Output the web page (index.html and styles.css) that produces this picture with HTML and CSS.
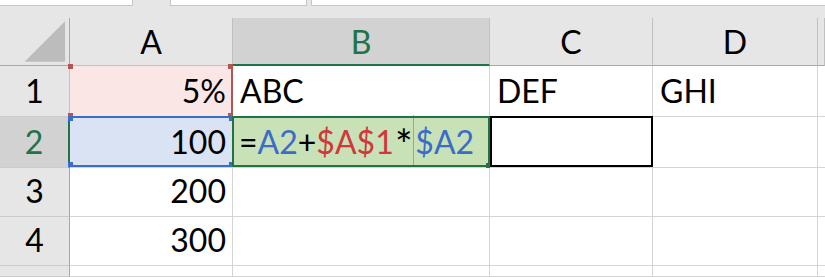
FILE: index.html
```html
<!DOCTYPE html>
<html lang="en">
<head>
  <meta charset="UTF-8" />
  <title>Sheet1</title>
  <link rel="stylesheet" href="styles.css">
</head>
<body>
  <div class="toolbar">
    <div class="box name-box"></div>
    <div class="box fx-box"></div>
    <div class="box formula-box"></div>
  </div>

  <div class="sheet">
    <!-- column headers -->
    <div class="hd corner">
      <svg width="70" height="48" viewBox="0 0 70 48"><polygon points="25,45 66,4 66,45" fill="#bcbcbc"/></svg>
    </div>
    <div class="hd col">A</div>
    <div class="hd col active-col">B</div>
    <div class="hd col">C</div>
    <div class="hd col">D</div>
    <div class="hd col"></div>

    <!-- row 1 -->
    <div class="hd row">1</div>
    <div class="cell num ref-red">5%
      <span class="range red"><i class="tl"></i><i class="tr"></i><i class="bl"></i><i class="br"></i></span>
    </div>
    <div class="cell">ABC</div>
    <div class="cell">DEF</div>
    <div class="cell">GHI</div>
    <div class="cell"></div>

    <!-- row 2 -->
    <div class="hd row active-row">2</div>
    <div class="cell num ref-blue">100
      <span class="range blue"><i class="tl"></i><i class="tr"></i><i class="bl"></i><i class="br"></i></span>
    </div>
    <div class="cell editing">
      <span>=</span><span class="c-blue">A2</span><span>+</span><span class="c-red">$A$1</span><span class="star">*</span><span class="caret"></span><span class="c-blue">$A2</span>
      <span class="range green"><i class="br"></i></span>
    </div>
    <div class="cell"><span class="range black"></span></div>
    <div class="cell"></div>
    <div class="cell"></div>

    <!-- row 3 -->
    <div class="hd row">3</div>
    <div class="cell num">200</div>
    <div class="cell"></div>
    <div class="cell"></div>
    <div class="cell"></div>
    <div class="cell"></div>

    <!-- row 4 -->
    <div class="hd row">4</div>
    <div class="cell num">300</div>
    <div class="cell"></div>
    <div class="cell"></div>
    <div class="cell"></div>
    <div class="cell"></div>

    <!-- row 5 (cut off) -->
    <div class="hd row"></div>
    <div class="cell"></div>
    <div class="cell"></div>
    <div class="cell"></div>
    <div class="cell"></div>
    <div class="cell"></div>
  </div>
</body>
</html>
```

FILE: styles.css
```css
* { box-sizing: border-box; }

body {
  margin: 0;
  background: #e6e6e6;
  font-family: Lato, "Open Sans", sans-serif;
  overflow: hidden;
}

/* strip of the formula bar above the grid */
.toolbar {
  display: flex;
  height: 6px;
  margin-bottom: 12px;
}

.box {
  background: #fff;
  border-bottom: 1px solid #c6c6c6;
}

.name-box {
  width: 133px;
  border-right: 1px solid #c6c6c6;
  margin-right: 37px;
}

.fx-box {
  width: 137px;
  border-left: 1px solid #c6c6c6;
  border-right: 1px solid #c6c6c6;
  margin-right: 4px;
}

.formula-box {
  flex: 1;
  border-left: 1px solid #c6c6c6;
}

/* grid */
.sheet {
  display: grid;
  grid-template-columns: 70px 163px 257px 163px 165px 7px;
  grid-template-rows: 48px 51px 51px 49px 49px 11px;
  font-size: 32px;
  line-height: 1;
  color: #000;
}

.hd {
  background: #e6e6e6;
  display: flex;
  align-items: flex-end;
  justify-content: center;
}

.hd.col {
  border-right: 1px solid #c0c0c0;
  border-bottom: 1px solid #a8a8a8;
  padding-bottom: 7px;
}

.hd.corner {
  border-right: 1px solid #a8a8a8;
  border-bottom: 1px solid #a8a8a8;
}

.hd.row {
  border-right: 1px solid #a8a8a8;
  border-bottom: 1px solid #cbcbcb;
  padding-bottom: 9px;
}

.hd.active-col {
  background: #d2d2d2;
  color: #217346;
  border-bottom: 2px solid #217346;
  padding-bottom: 6px;
}

.hd.active-row {
  background: #d2d2d2;
  color: #217346;
  border-right: 2px solid #217346;
}

.cell {
  position: relative;
  background: #fff;
  border-right: 1px solid #d4d4d4;
  border-bottom: 1px solid #d4d4d4;
  display: flex;
  align-items: flex-end;
  padding: 0 6px 9px 7px;
  white-space: nowrap;
}

.cell.num { justify-content: flex-end; }

.ref-red { background: #fbe6e6; }
.ref-blue { background: #dae3f3; }

.cell.editing {
  background: #c8e1b6;
  padding-left: 6px;
}

.c-blue { color: #3a6cc9; }
.c-red { color: #d0383b; }

.star {
  display: inline-block;
  transform: scale(1.3);
  transform-origin: 50% 30%;
  margin: 0 2px 0 3px;
}

.caret {
  align-self: stretch;
  width: 1px;
  margin: -2px 1px -9px 1px;
  background: #9aa896;
}

/* reference / selection outlines */
.range {
  position: absolute;
  top: -1px;
  left: -1px;
  right: -1px;
  bottom: -1px;
  pointer-events: none;
}

.range i {
  position: absolute;
  width: 5px;
  height: 5px;
}

.range .tl { top: -2px; left: -2px; }
.range .tr { top: -2px; right: -2px; }
.range .bl { bottom: -2px; left: -2px; }
.range .br { bottom: -2px; right: -2px; }

.range.red {
  border: 1px solid #e2b4b2;
  border-right: 2px solid #b35552;
}
.range.red i { background: #b35552; }

.range.blue {
  left: 0;
  right: 0;
  border-top: 2px solid #3a6cc9;
  border-bottom: 2px solid #3a6cc9;
  bottom: 0;
}
.range.blue i { background: #3a6cc9; }

.range.green {
  border: 2px solid #217346;
  bottom: 0;
}
.range.green i { background: #217346; bottom: -3px; right: -3px; }

.range.black {
  border: 2px solid #000;
  left: 0;
  bottom: 0;
}
```
